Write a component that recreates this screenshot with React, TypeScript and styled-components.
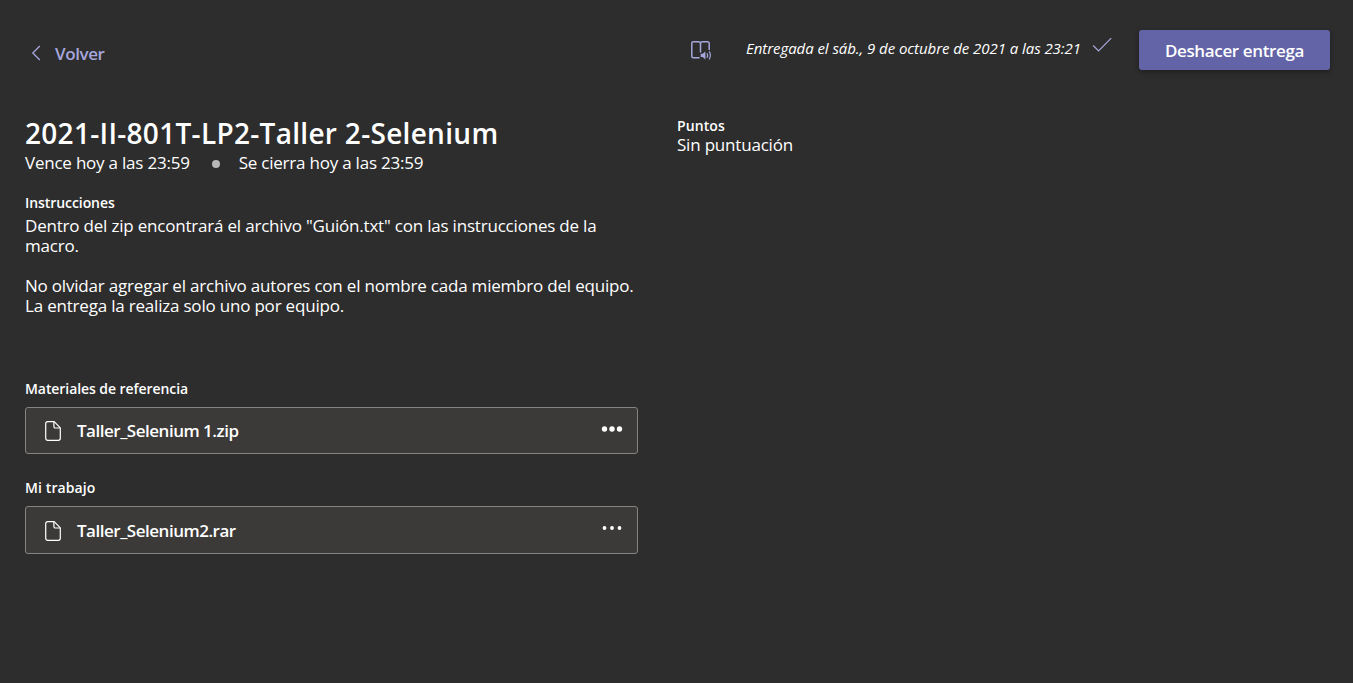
import React from 'react';
import styled, { createGlobalStyle } from 'styled-components';

const GlobalStyle = createGlobalStyle`
  * { box-sizing: border-box; }
  body {
    margin: 0;
    background: #2d2c2c;
    color: #fff;
    font-family: "Open Sans", "Noto Sans", sans-serif;
  }
`;

const Page = styled.div`
  min-height: 683px;
  width: 1353px;
  background: #2d2d2d;
  padding: 30px 23px 0 25px;
`;

const Header = styled.header`
  display: flex;
  justify-content: space-between;
  height: 40px;
`;

const BackButton = styled.button`
  display: flex;
  align-items: center;
  gap: 13px;
  height: 20px;
  margin-top: 13px;
  padding: 0 0 0 6px;
  border: 0;
  background: none;
  color: #a6a7dc;
  font: 600 17px/20px "Open Sans", sans-serif;
  letter-spacing: -0.4px;
`;

const BackText = styled.span`
  padding-top: 2px;
`;

const HeaderActions = styled.div`
  display: flex;
  align-items: flex-start;
`;

const ReaderIcon = styled.svg`
  display: block;
  width: 24px;
  height: 24px;
  margin: 8px 33px 0 0;
`;

const Submitted = styled.div`
  width: 336px;
  margin: 8px 10px 0 0;
  font-size: 15px;
  font-style: italic;
  line-height: 20px;
  letter-spacing: -0.06px;
  white-space: nowrap;
`;

const CheckIcon = styled.svg`
  display: block;
  width: 20px;
  height: 16px;
  margin: 7px 27px 0 0;
`;

const UndoButton = styled.button`
  width: 191px;
  height: 40px;
  padding: 2px 0 0;
  border: 0;
  border-radius: 3px;
  background: #6264a7;
  color: #fff;
  font: 600 17px/20px "Open Sans", sans-serif;
  letter-spacing: -0.36px;
  box-shadow: 0 2px 5px rgba(0, 0, 0, 0.35);
`;

const Content = styled.main`
  display: grid;
  grid-template-columns: 613px 1fr;
  column-gap: 39px;
  padding-top: 45px;
`;

const Title = styled.h1`
  margin: 0;
  font-size: 28px;
  font-weight: 600;
  line-height: 36px;
  letter-spacing: 0.3px;
  white-space: nowrap;
`;

const Dates = styled.div`
  display: flex;
  align-items: center;
  height: 20px;
  margin: 2px 0 20px;
  font-size: 17px;
  line-height: 20px;
  letter-spacing: -0.22px;
`;

const Dot = styled.span`
  width: 8px;
  height: 8px;
  margin: 1px 19px 0 22px;
  border-radius: 50%;
  background: #b8b7b6;
`;

const Label = styled.h2<{ $spacing?: number }>`
  margin: 0;
  font-size: 14px;
  font-weight: 600;
  line-height: 20px;
  letter-spacing: ${(p) => p.$spacing ?? -0.07}px;
`;

const Body = styled.p`
  margin: 0;
  font-size: 17px;
  line-height: 20px;
  letter-spacing: -0.2px;
  white-space: pre-wrap;
`;

const Instructions = styled.section`
  display: flex;
  flex-direction: column;
  gap: 3px;
  height: 186px;
`;

const Points = styled.section`
  display: flex;
  flex-direction: column;
  padding-top: 1px;

  ${Label} {
    line-height: 19px;
  }
`;

const FileSection = styled.section`
  display: flex;
  flex-direction: column;
  gap: 8px;
  margin-bottom: 24px;
`;

const FileCard = styled.div<{ $height: number }>`
  display: flex;
  align-items: center;
  height: ${(p) => p.$height}px;
  padding: 0 14px 0 19px;
  border: 1px solid #858482;
  border-radius: 3px;
  background: #3b3a39;
`;

const FileIcon = styled.svg`
  display: block;
  width: 16px;
  height: 20px;
  margin-top: 1px;
`;

const FileName = styled.span<{ $drop: number }>`
  flex: 1;
  margin-left: 16px;
  padding-top: ${(p) => p.$drop}px;
  font-size: 17px;
  font-weight: 600;
  line-height: 20px;
  letter-spacing: -0.49px;
`;

const MoreButton = styled.button`
  display: flex;
  width: 22px;
  height: 10px;
  margin-bottom: 4px;
  padding: 0;
  border: 0;
  background: none;
`;

interface DocumentFileProps {
  name: string;
  height: number;
  dot: number;
  drop?: number;
}

function DocumentFile({ name, height, dot, drop = 0 }: DocumentFileProps) {
  return (
    <FileCard $height={height}>
      <FileIcon viewBox="0 0 16 20" fill="none" stroke="#fff" strokeWidth="1.2" strokeLinejoin="round">
        <path d="M2.7.7H9.2L15.3 6.8V17.3a2 2 0 0 1-2 2H2.7a2 2 0 0 1-2-2V2.7a2 2 0 0 1 2-2Z" />
        <path d="M8.9.9V5.5a1.5 1.5 0 0 0 1.5 1.5H15" />
      </FileIcon>
      <FileName $drop={drop}>{name}</FileName>
      <MoreButton aria-label="Más opciones">
        <svg width="22" height="10" viewBox="0 0 22 10" fill="#fff">
          <circle cx="3.5" cy="5" r={dot} />
          <circle cx="11" cy="5" r={dot} />
          <circle cx="18.5" cy="5" r={dot} />
        </svg>
      </MoreButton>
    </FileCard>
  );
}

export default function App() {
  return (
    <Page>
      <GlobalStyle />
      <Header>
        <BackButton>
          <svg width="11" height="16" viewBox="0 0 11 16" fill="none" stroke="#a6a7dc" strokeWidth="1.3">
            <path d="M8.8 1 1.8 8l7 7" />
          </svg>
          <BackText>Volver</BackText>
        </BackButton>
        <HeaderActions>
          <ReaderIcon viewBox="0 0 24 24" fill="none" stroke="#a6a7dc" strokeWidth="1.5">
            <path d="M11.5 5.3A2 2 0 0 0 9.5 3.8H4.3A1.5 1.5 0 0 0 2.8 5.3V18.2a1.5 1.5 0 0 0 1.5 1.5H10.6" />
            <path d="M11.5 14.5V5.3A2 2 0 0 1 13.5 3.8H18.7a1.5 1.5 0 0 1 1.5 1.5V12" />
            <path d="M11.7 15.7h2l2.7-2.3v8l-2.7-2.3h-2Z" fill="#a6a7dc" stroke="none" />
            <path d="M18 15.2q1.3 2.2 0 4.5M20.2 13.4q2.4 4 0 8" strokeWidth="1.2" />
          </ReaderIcon>
          <Submitted>Entregada el sáb., 9 de octubre de 2021 a las 23:21</Submitted>
          <CheckIcon viewBox="0 0 20 16" fill="none" stroke="#a6a7dc" strokeWidth="1.2">
            <path d="M1.2 8.5 6.6 14 19.2 1.2" />
          </CheckIcon>
          <UndoButton>Deshacer entrega</UndoButton>
        </HeaderActions>
      </Header>
      <Content>
        <div>
          <Title>2021-II-801T-LP2-Taller 2-Selenium</Title>
          <Dates>
            Vence hoy a las 23:59
            <Dot />
            Se cierra hoy a las 23:59
          </Dates>
          <Instructions>
            <Label>Instrucciones</Label>
            <Body>
              {'Dentro del zip encontrará el archivo "Guión.txt" con las instrucciones de la\nmacro.\n\nNo olvidar agregar el archivo autores con el nombre cada miembro del equipo.\nLa entrega la realiza solo uno por equipo.'}
            </Body>
          </Instructions>
          <FileSection>
            <Label>Materiales de referencia</Label>
            <DocumentFile name="Taller_Selenium 1.zip" height={47} dot={2.7} />
          </FileSection>
          <FileSection>
            <Label $spacing={0.1}>Mi trabajo</Label>
            <DocumentFile name="Taller_Selenium2.rar" height={48} dot={1.9} drop={2} />
          </FileSection>
        </div>
        <Points>
          <Label $spacing={0.1}>Puntos</Label>
          <Body>Sin puntuación</Body>
        </Points>
      </Content>
    </Page>
  );
}
